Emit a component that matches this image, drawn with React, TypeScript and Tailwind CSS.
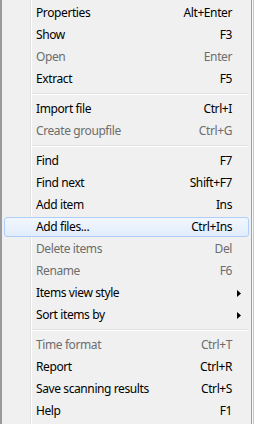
import React from "react";

type Item =
  | { sep: true }
  | { sep?: false; label: string; shortcut?: string; disabled?: boolean; hot?: boolean; sub?: boolean };

const items: Item[] = [
  { label: "Properties", shortcut: "Alt+Enter" },
  { label: "Show", shortcut: "F3" },
  { label: "Open", shortcut: "Enter", disabled: true },
  { label: "Extract", shortcut: "F5" },
  { sep: true },
  { label: "Import file", shortcut: "Ctrl+I" },
  { label: "Create groupfile", shortcut: "Ctrl+G", disabled: true },
  { sep: true },
  { label: "Find", shortcut: "F7" },
  { label: "Find next", shortcut: "Shift+F7" },
  { label: "Add item", shortcut: "Ins" },
  { label: "Add files...", shortcut: "Ctrl+Ins", hot: true },
  { label: "Delete items", shortcut: "Del", disabled: true },
  { label: "Rename", shortcut: "F6", disabled: true },
  { label: "Items view style", sub: true },
  { label: "Sort items by", sub: true },
  { sep: true },
  { label: "Time format", shortcut: "Ctrl+T", disabled: true },
  { label: "Report", shortcut: "Ctrl+R" },
  { label: "Save scanning results", shortcut: "Ctrl+S" },
  { label: "Help", shortcut: "F1" },
];

function Arrow() {
  return (
    <svg width="4" height="7" viewBox="0 0 4 7" className="block">
      <path d="M0 0 L4 3.5 L0 7 Z" fill="#000" />
    </svg>
  );
}

export default function App() {
  return (
    <div
      className="w-[254px] h-[424px] bg-[#f0f0f0] flex overflow-hidden text-[12px] tracking-[-0.4px]"
      style={{ fontFamily: '"Noto Sans", "Open Sans", sans-serif' }}
    >
      <div className="w-[2px] bg-[#9a9a9a] shrink-0" />
      <div className="relative flex-1 flex flex-col pt-[2px]">
        <div className="absolute left-[28px] top-0 bottom-0 w-[1px] bg-[#e2e3e3]" />
        <div className="absolute left-[29px] top-0 bottom-0 w-[1px] bg-[#ffffff]" />
        {items.map((it, i) =>
          it.sep ? (
            <div key={i} className="h-[8px] flex flex-col justify-center pl-[30px] pr-[2px]">
              <div className="h-[1px] bg-[#e0e0e0]" />
              <div className="h-[1px] bg-[#ffffff]" />
            </div>
          ) : (
            <div key={i} className="h-[22px] px-[2px] py-[1px] flex">
              <div
                className={
                  "relative flex-1 flex items-center rounded-[3px] border " +
                  (it.hot
                    ? "border-[#aecff7] bg-gradient-to-b from-[#f2f7fe] to-[#e1ecfb]"
                    : "border-transparent")
                }
              >
                <span
                  className={
                    "pl-[31px] flex-1 leading-none " +
                    (it.disabled ? "text-[#6d6d6d]" : "text-black")
                  }
                >
                  {it.label}
                </span>
                {it.shortcut && (
                  <span
                    className={
                      "pr-[16px] leading-none " +
                      (it.disabled ? "text-[#6d6d6d]" : "text-black")
                    }
                  >
                    {it.shortcut}
                  </span>
                )}
                {it.sub && (
                  <span className="pr-[7px]">
                    <Arrow />
                  </span>
                )}
              </div>
            </div>
          )
        )}
      </div>
      <div className="w-[1px] bg-[#a0a0a0] shrink-0" />
      <div className="w-[1px] bg-[#f8f8f8] shrink-0" />
      <div className="w-[1px] bg-[#c8c8c8] shrink-0" />
    </div>
  );
}
